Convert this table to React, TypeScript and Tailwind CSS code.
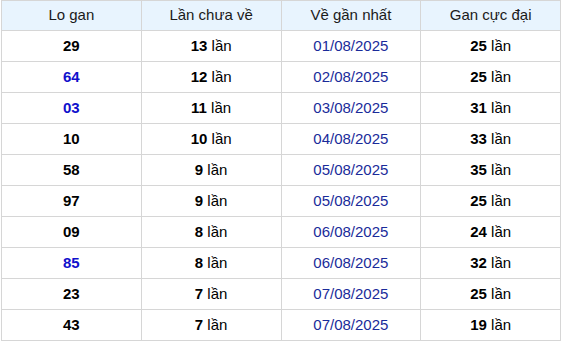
const rows: { num: string; hot: boolean; miss: number; date: string; max: number }[] = [
  { num: "29", hot: false, miss: 13, date: "01/08/2025", max: 25 },
  { num: "64", hot: true, miss: 12, date: "02/08/2025", max: 25 },
  { num: "03", hot: true, miss: 11, date: "03/08/2025", max: 31 },
  { num: "10", hot: false, miss: 10, date: "04/08/2025", max: 33 },
  { num: "58", hot: false, miss: 9, date: "05/08/2025", max: 35 },
  { num: "97", hot: false, miss: 9, date: "05/08/2025", max: 25 },
  { num: "09", hot: false, miss: 8, date: "06/08/2025", max: 24 },
  { num: "85", hot: true, miss: 8, date: "06/08/2025", max: 32 },
  { num: "23", hot: false, miss: 7, date: "07/08/2025", max: 25 },
  { num: "43", hot: false, miss: 7, date: "07/08/2025", max: 19 },
];

export default function App() {
  return (
    <div className="w-[562px] bg-white pl-px font-['Liberation_Sans',Arial,sans-serif] text-[15px]">
      <table className="w-[560px] table-fixed border-collapse border border-[#d6d6d6] text-center">
        <thead>
          <tr className="h-[30px] bg-[#e8f4fe] text-[#1a1a1a]">
            <th className="border border-[#d6d6d6] font-normal">Lo gan</th>
            <th className="border border-[#d6d6d6] font-normal">Lần chưa về</th>
            <th className="border border-[#d6d6d6] font-normal">Về gần nhất</th>
            <th className="border border-[#d6d6d6] font-normal">Gan cực đại</th>
          </tr>
        </thead>
        <tbody>
          {rows.map((r, i) => (
            <tr key={i} className="h-[31px]">
              <td className={`border border-[#d6d6d6] font-bold ${r.hot ? "text-[#1010cc]" : "text-black"}`}>{r.num}</td>
              <td className="border border-[#d6d6d6] text-black">
                <b>{r.miss}</b> lần
              </td>
              <td className="border border-[#d6d6d6] text-[#1a2b9a]">{r.date}</td>
              <td className="border border-[#d6d6d6] text-black">
                <b>{r.max}</b> lần
              </td>
            </tr>
          ))}
        </tbody>
      </table>
    </div>
  );
}
